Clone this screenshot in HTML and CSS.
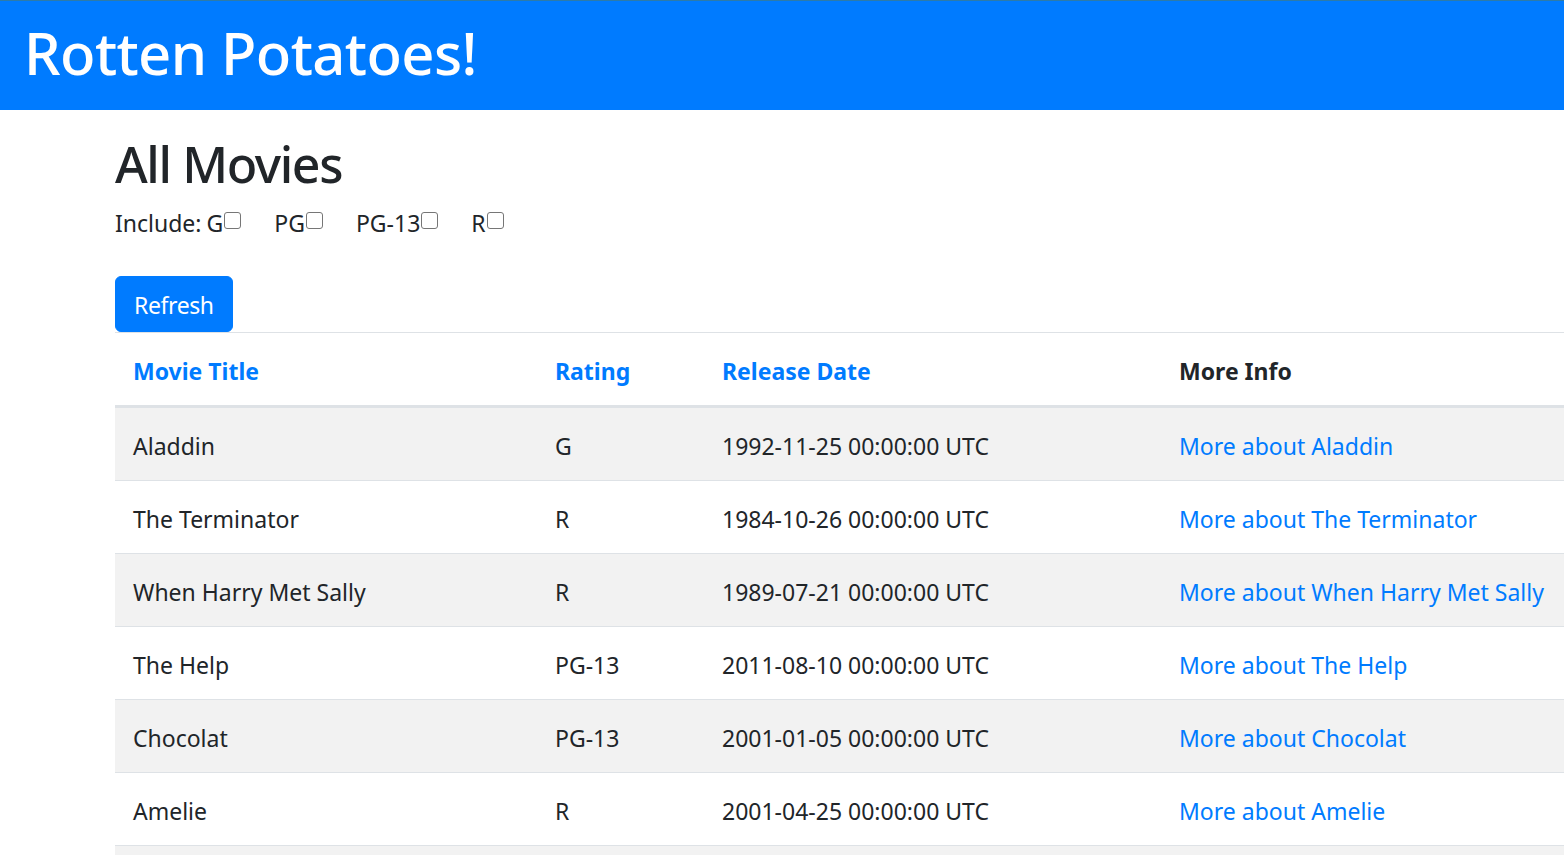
FILE: index.html
```html
<!DOCTYPE html>
<html lang="en">
<head>
<meta charset="utf-8">
<title>Rotten Potatoes!</title>
<link rel="stylesheet" href="styles.css">
</head>
<body>
<header class="topbar">
  <h1 class="brand">Rotten Potatoes!</h1>
</header>
<main class="content">
  <h1 class="page-title">All Movies</h1>
  <form class="filter">
    <div class="ratings">
      <span class="include">Include:</span>
      <label class="rating">G<input type="checkbox" class="check"></label>
      <label class="rating">PG<input type="checkbox" class="check"></label>
      <label class="rating">PG-13<input type="checkbox" class="check"></label>
      <label class="rating">R<input type="checkbox" class="check"></label>
    </div>
    <button type="button" class="btn">Refresh</button>
  </form>
  <table class="movies">
    <thead>
      <tr>
        <th class="c-title"><a href="#">Movie Title</a></th>
        <th class="c-rating"><a href="#">Rating</a></th>
        <th class="c-date"><a href="#">Release Date</a></th>
        <th class="c-info">More Info</th>
      </tr>
    </thead>
    <tbody>
      <tr><td>Aladdin</td><td>G</td><td>1992-11-25 00:00:00 UTC</td><td><a href="#">More about Aladdin</a></td></tr>
      <tr><td>The Terminator</td><td>R</td><td>1984-10-26 00:00:00 UTC</td><td><a href="#">More about The Terminator</a></td></tr>
      <tr><td>When Harry Met Sally</td><td>R</td><td>1989-07-21 00:00:00 UTC</td><td><a href="#">More about When Harry Met Sally</a></td></tr>
      <tr><td>The Help</td><td>PG-13</td><td>2011-08-10 00:00:00 UTC</td><td><a href="#">More about The Help</a></td></tr>
      <tr><td>Chocolat</td><td>PG-13</td><td>2001-01-05 00:00:00 UTC</td><td><a href="#">More about Chocolat</a></td></tr>
      <tr><td>Amelie</td><td>R</td><td>2001-04-25 00:00:00 UTC</td><td><a href="#">More about Amelie</a></td></tr>
      <tr class="tail"><td></td><td></td><td></td><td></td></tr>
    </tbody>
  </table>
</main>
</body>
</html>
```
FILE: styles.css
```css
html, body {
  margin: 0;
  padding: 0;
}
body {
  font-family: "Noto Sans", "Open Sans", sans-serif;
  font-size: 23px;
  line-height: 36px;
  color: #212529;
  background: #fff;
  overflow: hidden;
}
.topbar {
  background: #007bff;
  border-top: 1px solid #2d7ba8;
  height: 109px;
  box-sizing: content-box;
  padding-left: 24px;
}
.brand {
  margin: 0;
  padding-top: 16px;
  color: #fff;
  font-weight: 500;
  font-size: 58px;
  line-height: 72px;
  letter-spacing: -0.6px;
}
.content {
  padding-left: 115px;
}
.page-title {
  margin: 24px 0 11px;
  font-size: 50px;
  line-height: 60px;
  font-weight: 500;
  letter-spacing: -1.4px;
}
.ratings {
  display: flex;
  align-items: baseline;
}
.include {
  margin-right: 5px;
}
.rating {
  display: inline-flex;
  align-items: flex-start;
  margin-right: 33px;
}
.check {
  appearance: none;
  -webkit-appearance: none;
  width: 17px;
  height: 17px;
  margin: 7px 0 0 1px;
  border: 1px solid #767676;
  border-radius: 3px;
  background: #fff;
  box-sizing: border-box;
}
.btn {
  margin-top: 35px;
  display: block;
  font-family: inherit;
  font-size: 23px;
  line-height: 36px;
  padding: 10px 18px 8px;
  letter-spacing: -0.4px;
  color: #fff;
  background: #007bff;
  border: 1px solid #007bff;
  border-radius: 6px;
}
.movies {
  width: 100%;
  table-layout: fixed;
  border-collapse: collapse;
  border-top: 1px solid #dee2e6;
}
.movies th, .movies td {
  box-sizing: border-box;
  padding: 20px 18px 16px;
  text-align: left;
  vertical-align: top;
  white-space: nowrap;
}
.movies th {
  font-weight: 700;
  border-bottom: 3px solid #dee2e6;
}
.movies td {
  border-top: 1px solid #dee2e6;
}
.movies tbody tr:nth-child(odd) {
  background: #f2f2f2;
}
.movies .tail td {
  height: 72px;
}
.c-title { width: 422px; }
.c-rating { width: 167px; }
.c-date { width: 457px; }
a {
  color: #007bff;
  text-decoration: none;
}
```
